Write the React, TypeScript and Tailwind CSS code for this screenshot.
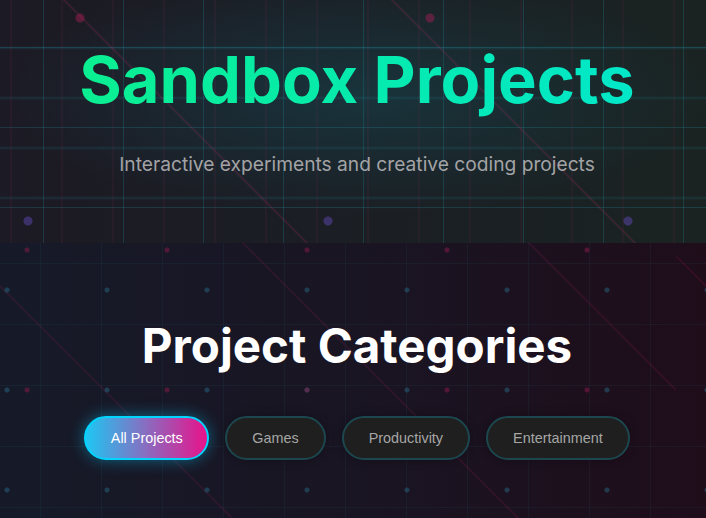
import React, { useState } from "react";

const categories: string[] = ["All Projects", "Games", "Productivity", "Entertainment"];

const HeaderBackdrop: React.FC = () => (
  <>
    {/* teal glow behind the title */}
    <div className="absolute inset-0 bg-[radial-gradient(ellipse_360px_120px_at_357px_95px,rgba(20,100,115,0.3),transparent)]" />
    {/* cyan grid, 80px */}
    <div className="absolute inset-0 bg-[linear-gradient(90deg,rgba(30,150,170,0.24)_1px,transparent_1px),linear-gradient(rgba(30,150,170,0.24)_1px,transparent_1px)] bg-size-[80px_80px] bg-position-[43px_47px]" />
    {/* soft horizontal scan lines */}
    <div className="absolute inset-0 bg-[linear-gradient(transparent_0px,rgba(30,150,170,0.08)_1px,rgba(30,150,170,0.16)_2px,rgba(30,150,170,0.08)_3px,transparent_4px)] bg-size-[100%_50px] bg-position-[0_96px]" />
    {/* pink verticals */}
    <div className="absolute inset-0 bg-[linear-gradient(90deg,rgba(170,40,100,0.08)_2px,transparent_2px)] bg-size-[51px_100%] bg-position-[10px_0]" />
    {/* diagonal pink streaks */}
    <div className="absolute inset-0 bg-[repeating-linear-gradient(45deg,transparent_0px,transparent_230px,rgba(190,40,100,0.16)_230px,rgba(190,40,100,0.16)_232px)] bg-position-[-20px_0]" />
    {/* dots */}
    <div className="absolute inset-0 bg-[radial-gradient(circle,rgba(100,75,190,0.45)_4px,transparent_5px)] bg-size-[300px_300px] bg-position-[-122px_71px]" />
    <div className="absolute inset-0 bg-[radial-gradient(circle,rgba(170,30,85,0.45)_4px,transparent_5px)] bg-size-[350px_350px] bg-position-[-95px_-157px]" />
  </>
);

const SectionBackdrop: React.FC = () => (
  <>
    {/* faint grid */}
    <div className="absolute inset-0 bg-[linear-gradient(90deg,rgba(40,140,160,0.08)_1px,transparent_1px),linear-gradient(rgba(40,140,160,0.08)_1px,transparent_1px)] bg-size-[61px_61px] bg-position-[40px_20px]" />
    {/* diagonal pink streaks */}
    <div className="absolute inset-0 bg-[repeating-linear-gradient(45deg,transparent_0px,transparent_200px,rgba(190,30,95,0.11)_200px,rgba(190,30,95,0.11)_202px)] bg-position-[-30px_0]" />
    {/* cyan dots */}
    <div className="absolute inset-0 bg-[radial-gradient(circle,rgba(40,110,140,0.45)_2px,transparent_3px)] bg-size-[100px_100px] bg-position-[-43px_-3px]" />
    {/* pink dots */}
    <div className="absolute inset-0 bg-[radial-gradient(circle,rgba(140,25,75,0.5)_2px,transparent_3px)] bg-size-[140px_140px] bg-position-[-43px_-63px]" />
  </>
);

const App: React.FC<object> = () => {
  const [active, setActive] = useState<string>("All Projects");

  return (
    <div className="min-h-screen bg-[#171a27] font-['Inter','Noto_Sans',sans-serif]">
      <header className="relative h-[243px] overflow-hidden bg-[linear-gradient(90deg,#1c1a24,#1b1e24_45%,#1a2322)] pl-2 text-center">
        <HeaderBackdrop />
        <div className="relative pt-[42px]">
          <h1 className="bg-[linear-gradient(90deg,#0cf08a,#00e6d0)] bg-clip-text text-[65px] leading-[76px] font-bold text-transparent">
            Sandbox Projects
          </h1>
          <p className="mt-[31px] text-[19.2px] leading-[30px] text-[#a3a3a6]">
            Interactive experiments and creative coding projects
          </p>
        </div>
      </header>

      <section className="relative overflow-hidden bg-[linear-gradient(90deg,#161a28,#1a1422_55%,#1f0d1a)] pb-20 pl-2 text-center">
        <SectionBackdrop />
        <div className="relative pt-[74px]">
          <h2 className="text-[47.5px] leading-[58px] font-bold text-white">Project Categories</h2>
          <div className="mt-[41px] flex justify-center gap-4 font-['Liberation_Sans',Arial,sans-serif]">
            {categories.map((cat) => (
              <button
                key={cat}
                onClick={() => setActive(cat)}
                className={
                  cat === active
                    ? "rounded-full border-2 border-[#00d4ff] bg-[linear-gradient(90deg,#1ec6f2,#8a6cc0_50%,#e8128a)] px-[24.5px] py-3 text-[14.4px] leading-4 text-white shadow-[0_0_16px_rgba(0,200,255,0.45)]"
                    : "rounded-full border-2 border-[#1c474e] bg-[#1f1f1f] px-[25px] py-3 text-[14.4px] leading-4 text-[#a6a6a6] shadow-[0_0_10px_rgba(0,0,0,0.3)]"
                }
              >
                {cat}
              </button>
            ))}
          </div>
        </div>
      </section>
    </div>
  );
};

export default App;
